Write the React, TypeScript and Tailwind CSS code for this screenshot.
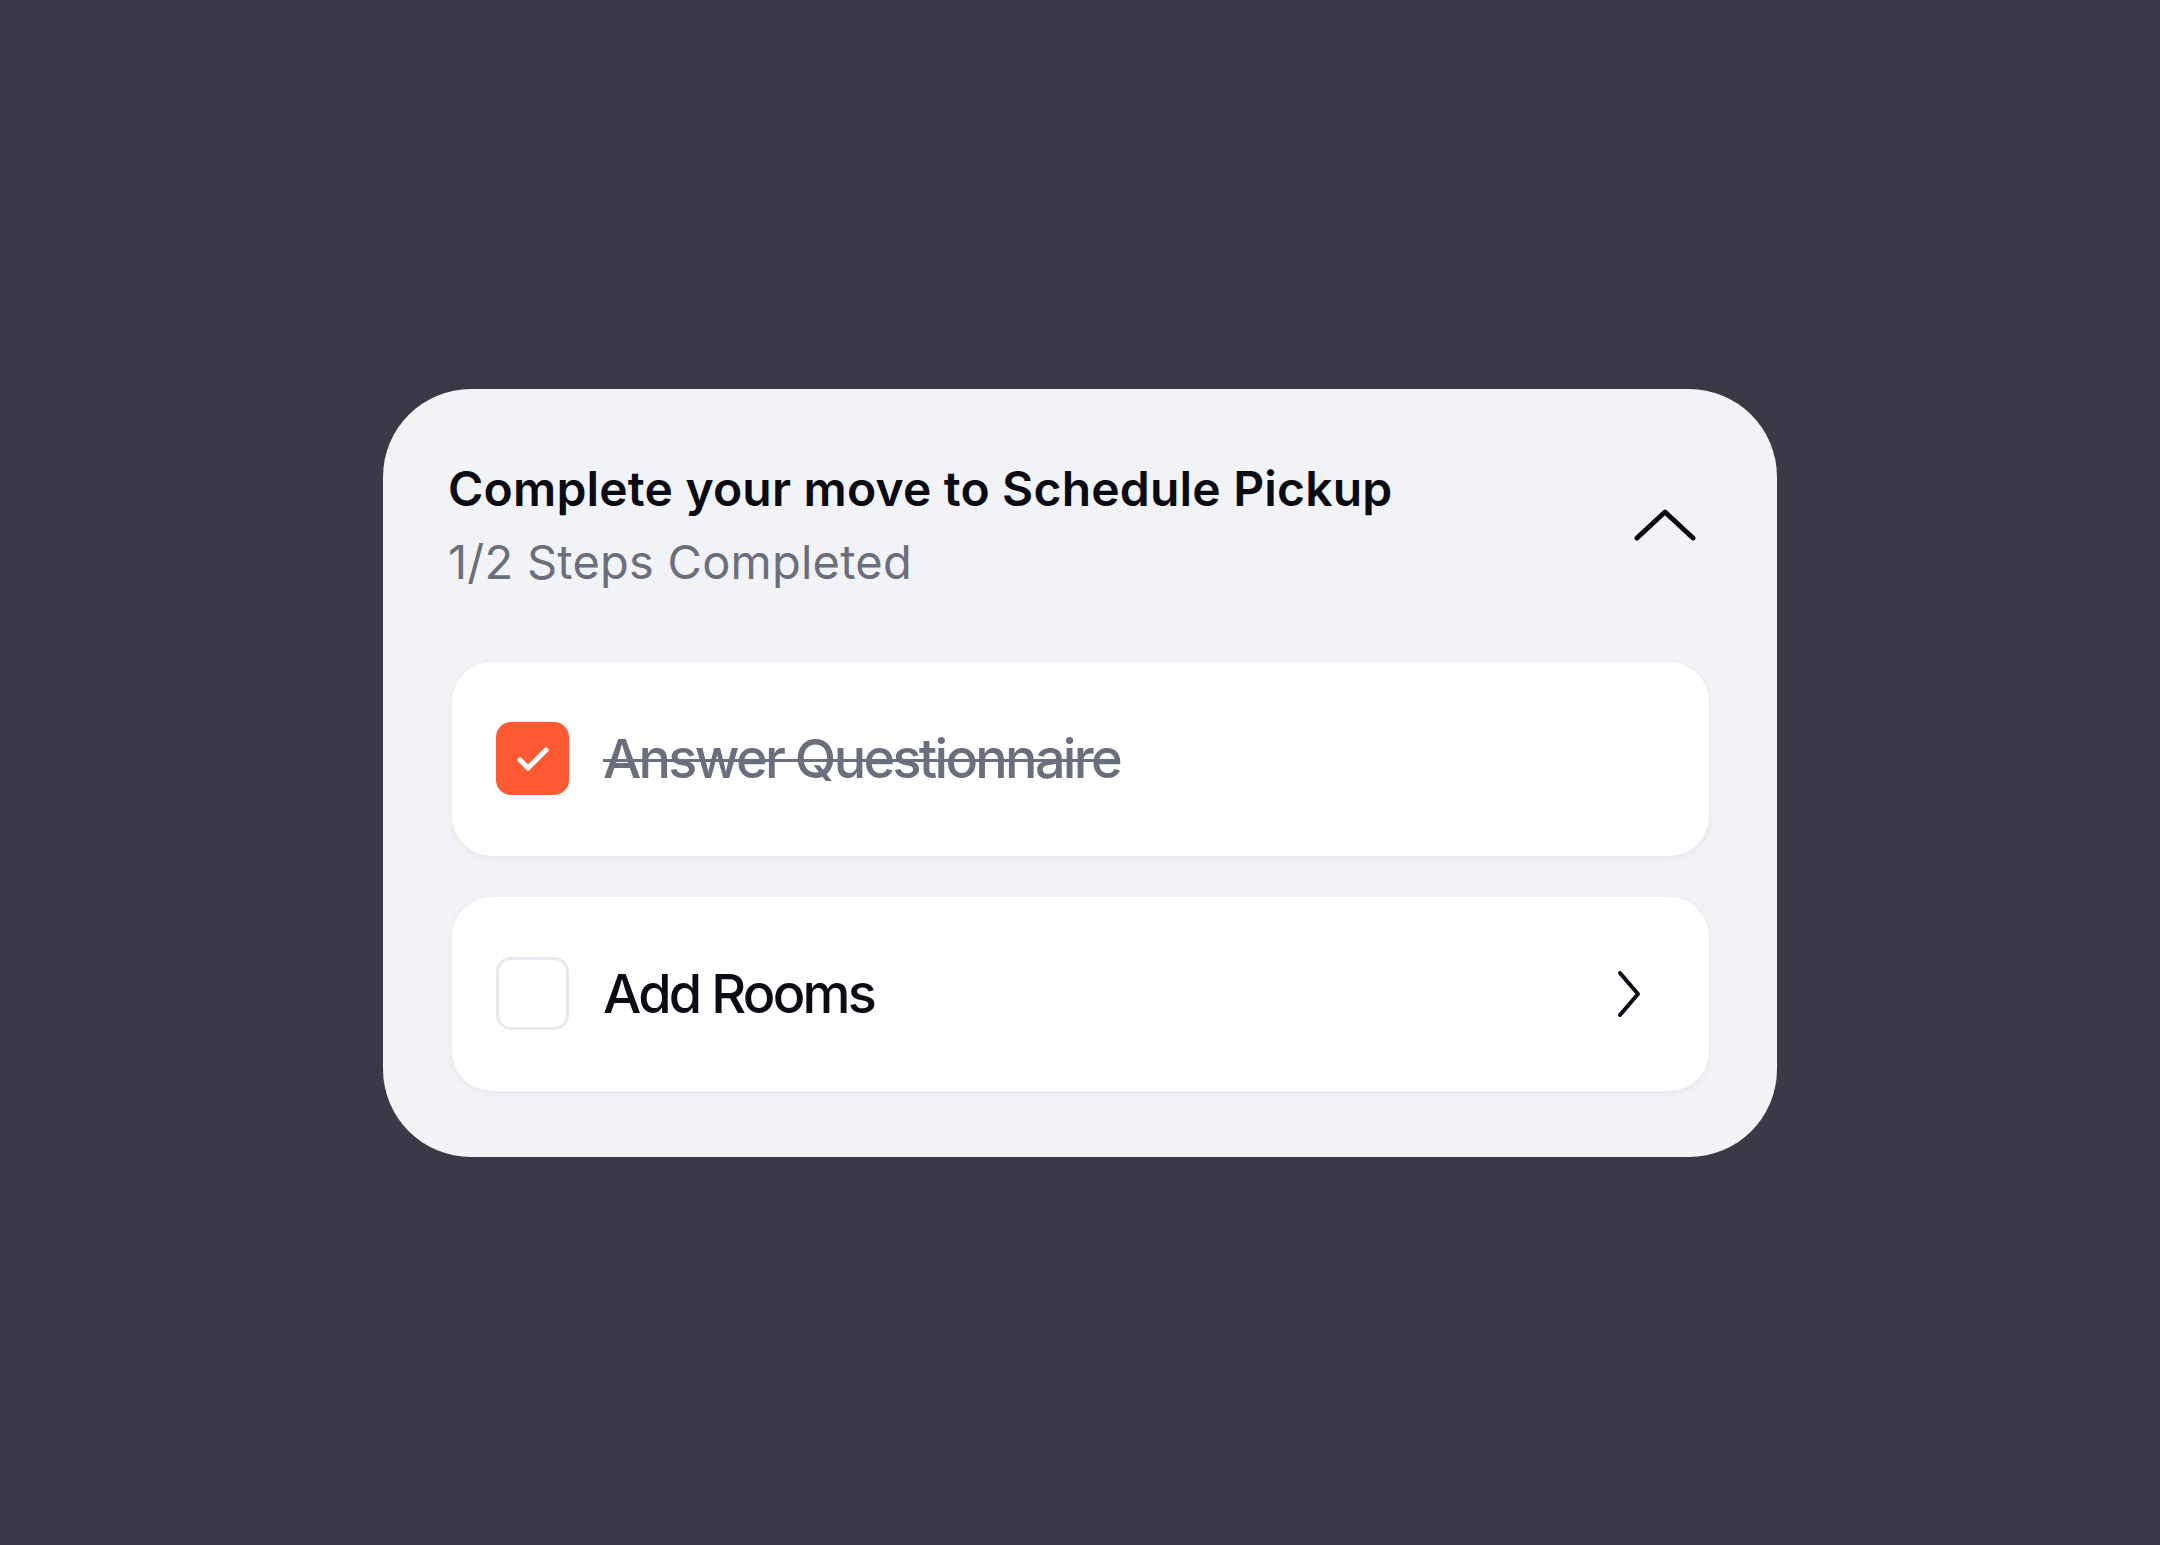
import React from "react";

interface Step {
  id: number;
  label: string;
  done: boolean;
}

const steps: Step[] = [
  { id: 1, label: "Answer Questionnaire", done: true },
  { id: 2, label: "Add Rooms", done: false },
];

function StepRow({ step }: { step: Step }) {
  return (
    <div className="flex h-[194px] items-center rounded-[40px] bg-white pl-[44px] pr-[68px] shadow-[0_2px_8px_rgba(20,20,40,0.05)]">
      {step.done ? (
        <div className="flex h-[73px] w-[73px] shrink-0 items-center justify-center rounded-[15px] bg-[#ff5a34]">
          <svg width="34" height="28" viewBox="0 0 34 28" fill="none">
            <polyline points="4,15 12,23 30,5" stroke="white" strokeWidth="5" strokeLinecap="round" strokeLinejoin="round" />
          </svg>
        </div>
      ) : (
        <div className="h-[73px] w-[73px] shrink-0 rounded-[15px] border-[3px] border-[#e8e8ee] bg-white" />
      )}
      <span
        className={
          step.done
            ? "ml-[34px] flex-1 text-[54px] font-medium leading-[64px] tracking-[-0.05em] text-[#6b6e7c] line-through decoration-[3px]"
            : "ml-[34px] flex-1 text-[54px] font-medium leading-[64px] tracking-[-0.05em] text-[#0b0b14]"
        }
      >
        {step.label}
      </span>
      {!step.done && (
        <svg width="24" height="48" viewBox="0 0 24 48" fill="none">
          <polyline points="3,3 21,24 3,45" stroke="#0b0b14" strokeWidth="4" strokeLinecap="round" strokeLinejoin="round" />
        </svg>
      )}
    </div>
  );
}

export default function App() {
  return (
    <div className="flex h-[1545px] w-full items-center justify-center bg-[#3a3a46]" style={{ fontFamily: "Inter, 'Noto Sans', sans-serif" }}>
      <div className="flex h-[768px] w-[1394px] flex-col rounded-[88px] bg-[#f2f3f7] pl-[69px] pr-[68px] pt-[72px]">
        <div className="flex items-center justify-between">
          <div className="-ml-[4px] flex flex-col">
            <h1 className="text-[48px] font-semibold leading-[56px] tracking-[0.004em] text-[#0b0b14]">
              Complete your move to Schedule Pickup
            </h1>
            <p className="mt-[18px] text-[47px] leading-[54px] tracking-[0.005em] text-[#6b6e7c]">1/2 Steps Completed</p>
          </div>
          <svg width="62" height="32" viewBox="0 0 62 32" fill="none" className="mr-[13px]">
            <polyline points="3,29 31,3 59,29" stroke="#0b0b14" strokeWidth="5" strokeLinecap="round" strokeLinejoin="round" />
          </svg>
        </div>
        <div className="mt-[73px] flex flex-col gap-[41px]">
          {steps.map((s) => (
            <StepRow key={s.id} step={s} />
          ))}
        </div>
      </div>
    </div>
  );
}
